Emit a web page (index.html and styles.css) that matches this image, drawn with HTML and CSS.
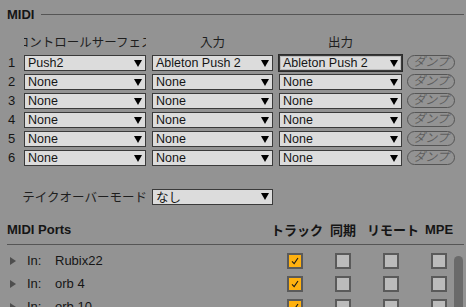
FILE: index.html
```html
<!DOCTYPE html>
<html lang="ja">
<head>
    <meta charset="UTF-8">
    <meta name="viewport" content="width=device-width, initial-scale=1.0">
    <title>MIDI</title>
    <link rel="stylesheet" href="styles.css">
</head>
<body>
    <div class="section-head">
        <span class="title">MIDI</span>
        <span class="rule"></span>
    </div>

    <div class="surfaces">
        <div></div>
        <div class="col-head clip"><span>コントロールサーフェス</span></div>
        <div class="col-head">入力</div>
        <div class="col-head">出力</div>
        <div></div>

        <div class="num">1</div>
        <div class="select"><span>Push2</span><i class="arrow"></i></div>
        <div class="select"><span>Ableton Push 2</span><i class="arrow"></i></div>
        <div class="select focus"><span>Ableton Push 2</span><i class="arrow"></i></div>
        <div class="dump">ダンプ</div>

        <div class="num">2</div>
        <div class="select"><span>None</span><i class="arrow"></i></div>
        <div class="select"><span>None</span><i class="arrow"></i></div>
        <div class="select"><span>None</span><i class="arrow"></i></div>
        <div class="dump">ダンプ</div>

        <div class="num">3</div>
        <div class="select"><span>None</span><i class="arrow"></i></div>
        <div class="select"><span>None</span><i class="arrow"></i></div>
        <div class="select"><span>None</span><i class="arrow"></i></div>
        <div class="dump">ダンプ</div>

        <div class="num">4</div>
        <div class="select"><span>None</span><i class="arrow"></i></div>
        <div class="select"><span>None</span><i class="arrow"></i></div>
        <div class="select"><span>None</span><i class="arrow"></i></div>
        <div class="dump">ダンプ</div>

        <div class="num">5</div>
        <div class="select"><span>None</span><i class="arrow"></i></div>
        <div class="select"><span>None</span><i class="arrow"></i></div>
        <div class="select"><span>None</span><i class="arrow"></i></div>
        <div class="dump">ダンプ</div>

        <div class="num">6</div>
        <div class="select"><span>None</span><i class="arrow"></i></div>
        <div class="select"><span>None</span><i class="arrow"></i></div>
        <div class="select"><span>None</span><i class="arrow"></i></div>
        <div class="dump">ダンプ</div>
    </div>

    <div class="takeover">
        <span class="label">テイクオーバーモード</span>
        <div class="select wide"><span>なし</span><i class="arrow"></i></div>
    </div>

    <div class="ports-head">
        <span class="title">MIDI Ports</span>
        <span class="ch">トラック</span>
        <span class="ch">同期</span>
        <span class="ch">リモート</span>
        <span class="ch">MPE</span>
    </div>

    <div class="port-list">
        <div class="port">
            <div class="port-name"><i class="tri"></i><span class="dir">In:</span><span>Rubix22</span></div>
            <span class="cb on"><svg viewBox="0 0 14 14"><path d="M3.5 7.5 L6 10 L10.5 3.5"/></svg></span>
            <span class="cb"></span>
            <span class="cb"></span>
            <span class="cb"></span>
        </div>
        <div class="port">
            <div class="port-name"><i class="tri"></i><span class="dir">In:</span><span>orb 4</span></div>
            <span class="cb on"><svg viewBox="0 0 14 14"><path d="M3.5 7.5 L6 10 L10.5 3.5"/></svg></span>
            <span class="cb"></span>
            <span class="cb"></span>
            <span class="cb"></span>
        </div>
        <div class="port">
            <div class="port-name"><i class="tri"></i><span class="dir">In:</span><span>orb 10</span></div>
            <span class="cb on"><svg viewBox="0 0 14 14"><path d="M3.5 7.5 L6 10 L10.5 3.5"/></svg></span>
            <span class="cb"></span>
            <span class="cb"></span>
            <span class="cb"></span>
        </div>
        <div class="scrollbar"></div>
    </div>
</body>
</html>
```

FILE: styles.css
```css
body {
    margin: 0;
    background: #939393;
    color: #151515;
    font-family: "Liberation Sans", "Noto Sans CJK JP", sans-serif;
    font-size: 12px;
    overflow: hidden;
}
.section-head {
    height: 28px;
    display: flex;
    align-items: center;
    padding: 0 2px 0 7px;
}
.title {
    font-weight: bold;
    font-size: 13px;
}
.rule {
    flex: 1;
    border-top: 1px solid #555;
    margin-left: 7px;
}
.surfaces {
    display: grid;
    grid-template-columns: 11px 122px 121px 123px 47px;
    grid-template-rows: 24px;
    grid-auto-rows: 16px;
    column-gap: 6px;
    row-gap: 3px;
    padding-left: 7px;
}
.col-head {
    display: flex;
    justify-content: center;
    align-items: center;
    padding-top: 2px;
    font-size: 12.5px;
    color: #1e1e1e;
    white-space: nowrap;
}
.clip {
    overflow: hidden;
}
.num {
    padding-left: 1px;
    line-height: 16px;
    font-size: 13px;
}
.select {
    display: flex;
    justify-content: space-between;
    align-items: center;
    box-sizing: border-box;
    height: 16px;
    border: 1px solid #3a3a3a;
    background: #dcdcdc;
    padding: 0 3px;
    font-size: 12.5px;
    white-space: nowrap;
}
.select.focus {
    outline: 1px solid #2c2c2c;
    box-shadow: inset 0 0 0 1px #bdbdbd;
}
.arrow {
    width: 0;
    height: 0;
    border-left: 4px solid transparent;
    border-right: 4px solid transparent;
    border-top: 7px solid #000;
}
.dump {
    box-sizing: border-box;
    height: 15px;
    margin-left: -1px;
    border: 1px solid #555;
    border-radius: 8px;
    color: #5e5e5e;
    font-size: 12px;
    font-style: italic;
    line-height: 13px;
    text-align: center;
}
.takeover {
    display: flex;
    align-items: center;
    gap: 5px;
    margin-top: 21px;
    padding-left: 7px;
}
.takeover .label {
    width: 140px;
    text-align: right;
    font-size: 12.5px;
    color: #1e1e1e;
    white-space: nowrap;
}
.select.wide {
    width: 121px;
}
.ports-head {
    display: grid;
    grid-template-columns: 1fr 48px 48px 48px 48px;
    align-items: center;
    height: 29px;
    margin: 9px 2px 0 7px;
    padding-right: 1px;
    border-bottom: 1px solid #555;
}
.ch {
    text-align: center;
    font-weight: bold;
    font-size: 13px;
    white-space: nowrap;
}
.port-list {
    position: relative;
    margin: 0 2px 0 7px;
    padding: 4px 1px 0 0;
}
.port {
    display: grid;
    grid-template-columns: 1fr 48px 48px 48px 48px;
    align-items: center;
    justify-items: center;
    height: 23px;
    font-size: 13px;
}
.port-name {
    justify-self: start;
    display: flex;
    align-items: center;
}
.tri {
    width: 0;
    height: 0;
    margin-left: 3px;
    border-left: 6px solid #4e4e4e;
    border-top: 4px solid transparent;
    border-bottom: 4px solid transparent;
}
.dir {
    width: 28px;
    margin-left: 11px;
}
.cb {
    box-sizing: border-box;
    width: 16px;
    height: 16px;
    border: 2px solid #5a5a5a;
    background: #bbbbbb;
    display: flex;
}
.cb.on {
    background: #ffb10f;
}
.cb svg {
    width: 12px;
    height: 12px;
    fill: none;
    stroke: #1a1a1a;
    stroke-width: 1.3;
}
.scrollbar {
    position: absolute;
    left: 447px;
    top: 11px;
    width: 9px;
    height: 80px;
    border-radius: 5px 5px 0 0;
    background: #6a6a6a;
}
```
